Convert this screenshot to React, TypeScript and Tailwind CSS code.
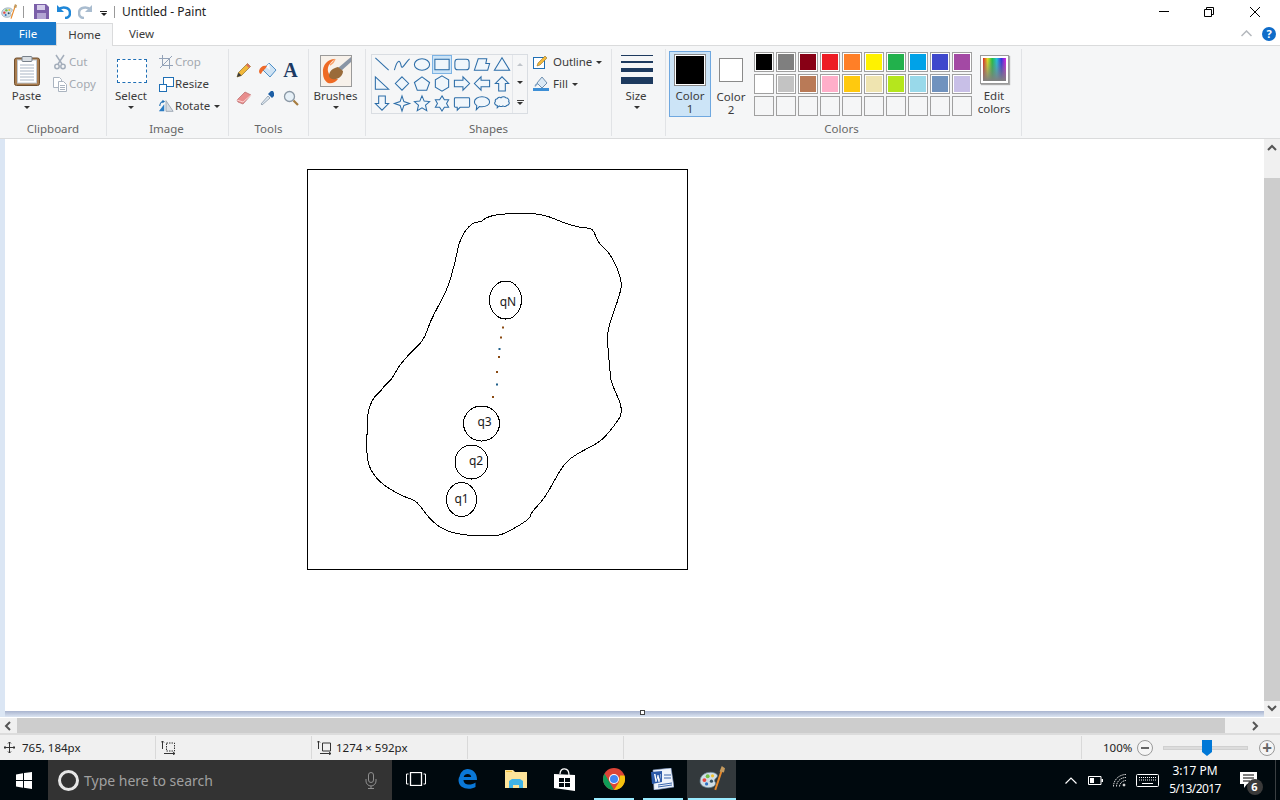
import type { ReactNode } from 'react'

const palette = [
  ['#000000', '#7f7f7f', '#880015', '#ed1c24', '#ff7f27', '#fff200', '#22b14c', '#00a2e8', '#3f48cc', '#a349a4'],
  ['#ffffff', '#c3c3c3', '#b97a57', '#ffaec9', '#ffc90e', '#efe4b0', '#b5e61d', '#99d9ea', '#7092be', '#c8bfe7'],
]

const shapes: ReactNode[] = [
  <path d="M3 3 17 16" />,
  <path d="M2 16C5 4 8 5 9 11c1 6 5-4 9-7" fill="none" />,
  <ellipse cx="10" cy="10" rx="8" ry="6" />,
  <rect x="2.5" y="4.5" width="15" height="11" />,
  <rect x="2.5" y="4.5" width="15" height="11" rx="3" />,
  <path d="M6 4h9l-1 5h4l-2 7H2Z" />,
  <path d="M10 3l8 13H2Z" />,
  <path d="M3 3l14 13H3Z" />,
  <path d="M10 3l7 7-7 7-7-7Z" />,
  <path d="M10 3l8 6-3 8H5L2 9Z" />,
  <path d="M10 2l7 4v8l-7 4-7-4V6Z" />,
  <path d="M2 6.5h9V3l7 7-7 7v-3.5H2Z" />,
  <path d="M18 6.5H9V3l-7 7 7 7v-3.5h9Z" />,
  <path d="M6.5 18V10H3l7-7 7 7h-3.5v8Z" />,
  <path d="M6.5 2v8H3l7 7 7-7h-3.5V2Z" />,
  <path d="M10 2l2 6 6 2-6 2-2 6-2-6-6-2 6-2Z" />,
  <path d="M10 2l2.3 5.5 5.7.5-4.3 3.8 1.3 5.7-5-3-5 3 1.3-5.700L2 8l5.700-.5Z" />,
  <path d="M10 2l2.5 4H17l-2.200 4 2.200 4h-4.500L10 18l-2.500-4H3l2.200-4L3 6h4.500Z" />,
  <path d="M3 4h14a1 1 0 0 1 1 1v8a1 1 0 0 1-1 1H8l-3 3v-3H3a1 1 0 0 1-1-1V5a1 1 0 0 1 1-1Z" />,
  <path d="M10 3c4.500 0 8 2.300 8 5.300s-3.500 5.200-8 5.200c-1 0-2 0-2.800-.3L4 16.500l.5-4.300C3 11.200 2 9.800 2 8.300 2 5.300 5.500 3 10 3Z" />,
  <path d="M5 5c1-2 3-2 4-1 1-1.500 4-1.500 5 0 2 0 4 2 3 4 1.500 1.500 0 4-2 4-1 1.500-3 1.500-4 .5-1 1-3 1-4 0l-2 2v-2.500C2.500 12 1.500 9.500 3 8c-.5-1.500.5-3 2-3Z" />,
]

// traced from the freehand outline
const blob = [
  [396.7, 370], [392, 379], [385, 385], [381.7, 390], [373, 398], [367.3, 413], [367, 436], [366.7, 458], [371.7, 473],
  [385, 486.7], [406.7, 498], [416.7, 500.7], [430, 520], [446.7, 531.7], [470, 536], [496.7, 536], [506.7, 532.7],
  [530, 519], [530.7, 513], [545, 498], [560, 470], [570, 458], [588, 448], [601.7, 440.7], [615, 425], [624, 410.7],
  [610.7, 381.7], [610, 370], [608, 350], [607, 330], [620.7, 293], [621.7, 280], [611.7, 255], [598, 243], [593, 228],
  [581.7, 228], [563, 222.7], [550, 216.7], [533, 213], [498, 214], [485, 218], [481.7, 221.7], [471.7, 222.7], [460, 238],
  [455, 263], [448, 287], [440, 303], [430, 321.7], [424, 340], [410, 353], [400, 365],
]

function smoothPath(pts: number[][]) {
  const mid = (a: number[], b: number[]) => `${(a[0] + b[0]) / 2} ${(a[1] + b[1]) / 2}`
  let d = `M${mid(pts[pts.length - 1], pts[0])}`
  pts.forEach((p, i) => {
    d += `Q${p[0]} ${p[1]} ${mid(p, pts[(i + 1) % pts.length])}`
  })
  return d + 'Z'
}

function Caret({ className = '' }: { className?: string }) {
  return <span className={`inline-block border-x-[3px] border-t-[3px] border-x-transparent border-t-[#333] ${className}`} />
}

function PaintIcon({ size }: { size: number }) {
  return (
    <svg width={size} height={size} viewBox="0 0 24 24">
      <path d="M1 14C1 8 7 5 13 6c4 1 5 3 3 5-2 1-2 3-1 4 1 2-1 5-6 5-4 0-8-2-8-6Z" fill="#cfdde6" stroke="#65808f" strokeWidth=".7" />
      <circle cx="5" cy="13" r="1.800" fill="#e8483e" />
      <circle cx="8" cy="9.500" r="1.800" fill="#72bf44" />
      <circle cx="12.500" cy="9" r="1.500" fill="#f2c230" />
      <circle cx="7" cy="16.500" r="1.500" fill="#2e6fc0" />
      <circle cx="11.500" cy="14" r="1.500" fill="#36505f" />
      <path d="M21 4 15 22" stroke="#e8892b" strokeWidth="1.800" />
      <path d="M19 5 21 0l3 2-1 4Z" fill="#c49a5e" />
    </svg>
  )
}

function PasteIcon() {
  return (
    <svg width="26" height="31" viewBox="0 0 26 31">
      <rect x=".5" y="3" width="25" height="27.500" rx="2" fill="#a87c4f" stroke="#6f4f2e" />
      <rect x="3.500" y="5" width="19" height="23" fill="#fff" stroke="#c0c8d0" />
      <path d="M6 10h14M6 13h14M6 16h14M6 19h14M6 22h14M6 25h14" stroke="#a9b5c4" />
      <rect x="8" y="1.500" width="10" height="5" rx="1" fill="#d8dde2" stroke="#77808a" />
    </svg>
  )
}

function CutIcon() {
  return (
    <svg width="12" height="16" viewBox="0 0 12 16" fill="none" stroke="#a4aebb" strokeWidth="1.500">
      <path d="M2 1l6 9M10 1 4 10" />
      <circle cx="3" cy="12.500" r="2.200" />
      <circle cx="9" cy="12.500" r="2.200" />
    </svg>
  )
}

function CopyIcon() {
  return (
    <svg width="16" height="16" viewBox="0 0 16 16" fill="#fff" stroke="#aab4c0">
      <path d="M1.500 1.500h6l2 2v8h-8Z" />
      <path d="M6.500 5.500h5l3 3v7h-8Z" />
      <path d="M8 9.500h5M8 11.500h5M8 13.500h5" />
    </svg>
  )
}

function SelectIcon() {
  return <div className="ml-[1px] w-[30px] h-[24px] border border-dashed border-[#1f6fb5] bg-white" />
}

function CropIcon() {
  return (
    <svg width="14" height="14" viewBox="0 0 14 14" fill="none" stroke="#94a3b8">
      <path d="M3.500 0v10.500H14M0 3.500h10.500V14M1 13 13 1" />
    </svg>
  )
}

function ResizeIcon() {
  return (
    <svg width="15" height="15" viewBox="0 0 15 15" fill="#fff" stroke="#1f6fb5">
      <rect x="4.500" y=".5" width="10" height="9" />
      <rect x=".5" y="7.500" width="7" height="7" />
    </svg>
  )
}

function RotateIcon() {
  return (
    <svg width="18" height="14" viewBox="0 0 18 14">
      <path d="M1 13 7 5v8Z" fill="#2b7cc4" />
      <path d="M9 1l8 12H9Z" fill="#d8dde3" stroke="#9aa5b2" />
      <path d="M2 7c0-3 2-5 4-5" fill="none" stroke="#1f6fb5" strokeWidth="1.300" />
      <path d="M5 0l3 2-3 2Z" fill="#1f6fb5" />
    </svg>
  )
}

function ToolIcon({ name }: { name: string }) {
  if (name === 'pencil')
    return (
      <svg width="16" height="16" viewBox="0 0 16 16">
        <path d="M1 15l1.500-4.500L11.500 1.500l3 3-9 9Z" fill="#f2b83a" stroke="#8e7430" strokeWidth=".7" />
        <path d="M11.500 1.500l3 3-1.500 1.500-3-3Z" fill="#d9705c" />
        <path d="M1 15l1.500-4.500 3 3Z" fill="#3b3b3b" />
      </svg>
    )
  if (name === 'fill')
    return (
      <svg width="18" height="17" viewBox="0 0 18 17">
        <path d="M10 1l7 7-6 7-7-7Z" fill="#cfe3f4" stroke="#4d8ec6" />
        <path d="M10 1 7 5l4 3Z" fill="#f7f9fb" />
        <path d="M8 4C4 3 1 5 0 9c0 2 1 3 2 3 1-2 2-4 4-5Z" fill="#ef6a2b" />
      </svg>
    )
  if (name === 'text')
    return (
      <span className="font-['Liberation_Serif',serif] font-bold text-[20px] leading-none text-[#1c3a63]">A</span>
    )
  if (name === 'eraser')
    return (
      <svg width="16" height="14" viewBox="0 0 16 14">
        <path d="M1 9 9 1l6 3-8 9-5-2Z" fill="#e88d8d" stroke="#b56a6a" strokeWidth=".7" />
        <path d="M1 9l6 2 8-7" fill="none" stroke="#fbd0d0" />
      </svg>
    )
  if (name === 'picker')
    return (
      <svg width="16" height="16" viewBox="0 0 16 16">
        <path d="M2 15 1 14l7-8 2 2Z" fill="#dbe5ee" stroke="#7b8d9d" strokeWidth=".7" />
        <path d="M8 4l4 4 2-2V3l-1-2h-2Z" fill="#1d5fa5" />
      </svg>
    )
  return (
    <svg width="16" height="16" viewBox="0 0 16 16" fill="none">
      <circle cx="6.500" cy="6.500" r="5" fill="#e6f0f7" stroke="#8a98a5" strokeWidth="1.300" />
      <path d="M10.500 10.500 15 15" stroke="#a67c3f" strokeWidth="2.200" />
    </svg>
  )
}

function BrushesIcon() {
  return (
    <div className="w-[32px] h-[32px] border border-[#9a9a9a] bg-[#f7f1ea] overflow-hidden">
      <svg width="30" height="30" viewBox="0 0 30 30">
        <path d="M2 17C1 9 7 3 14 3 8 7 5 12 8 18c2 3 4 5 9 5-3 4-7 5-10 4-3-2-5-5-5-10Z" fill="#ee6a24" />
        <path d="M14 3c-1 3-3 5-5 6" fill="none" stroke="#f9a36f" strokeWidth="1.500" />
        <path d="M30 1 17 12l3 3L30 6Z" fill="#8995a5" />
        <path d="M17 11c-5 1-9 4-9 9 0 2 4 4 7 3 5-1 7-5 7-8Z" fill="#9a6b39" />
      </svg>
    </div>
  )
}

function OutlineIcon() {
  return (
    <svg width="16" height="16" viewBox="0 0 16 16">
      <rect x=".5" y="3.500" width="11" height="11" fill="#fff" stroke="#1f6fb5" />
      <path d="M4 12l1-3 7-7 2 2-7 7Z" fill="#f2b83a" stroke="#8e7430" strokeWidth=".6" />
    </svg>
  )
}

function FillIcon() {
  return (
    <svg width="16" height="16" viewBox="0 0 16 16">
      <path d="M9 1l5 6-5 5-5-5Z" fill="#dbe9f5" stroke="#6f8fae" />
      <path d="M4 7C2 8 1 10 2 11c1-1 2-2 3-3Z" fill="#7ba0c4" />
      <rect y="12" width="16" height="3" fill="#3d8fd6" />
    </svg>
  )
}

function BigButton({ width, icon, label, className = '' }: { width: string; icon: ReactNode; label: string; className?: string }) {
  return (
    <div className={`flex flex-col items-center pt-[5px] ${width} ${className}`}>
      <div className="h-[33px] flex items-center justify-center">{icon}</div>
      <div className="h-[14px] mt-[2px] leading-[14px]">{label}</div>
      <Caret className="mt-[3px]" />
    </div>
  )
}

function SmallButton({ icon, label, muted, caret }: { icon: ReactNode; label: string; muted?: boolean; caret?: boolean }) {
  return (
    <div className={`h-[22px] flex items-center gap-[1px] ${muted ? 'text-[#a3a9b0]' : ''}`}>
      <div className="w-[16px] flex justify-center">{icon}</div>
      <span>{label}</span>
      {caret && <Caret className="ml-[3px]" />}
    </div>
  )
}

function Group({ width, label, children, labelClass = '' }: { width: string; label: string; children: ReactNode; labelClass?: string }) {
  return (
    <div className={`${width} h-[87px] flex flex-col border-r border-[#e1e3e6]`}>
      <div className="flex-1 flex min-h-0">{children}</div>
      <div className={`h-[14px] leading-[14px] text-center text-[#666] ${labelClass}`}>{label}</div>
    </div>
  )
}

function Ribbon() {
  return (
    <div className="h-[93px] shrink-0 bg-[#f5f6f7] border-b border-[#dadbdc] flex items-start pt-[3px] text-[#3b3b3b]">
      <Group width="w-[107px]" label="Clipboard">
        <BigButton width="w-[43px]" className="ml-[5px]" icon={<PasteIcon />} label="Paste" />
        <div className="pt-[2px] ml-[4px]">
          <SmallButton muted icon={<CutIcon />} label="Cut" />
          <SmallButton muted icon={<CopyIcon />} label="Copy" />
        </div>
      </Group>

      <Group width="w-[122px]" label="Image" labelClass="pr-[2px]">
        <BigButton width="w-[48px]" icon={<SelectIcon />} label="Select" />
        <div className="pt-[2px] ml-[3px]">
          <SmallButton muted icon={<CropIcon />} label="Crop" />
          <SmallButton icon={<ResizeIcon />} label="Resize" />
          <SmallButton icon={<RotateIcon />} label="Rotate" caret />
        </div>
      </Group>

      <Group width="w-[80px]" label="Tools">
        <div className="grid grid-cols-[24px_23px_23px] grid-rows-[28px_28px] items-center justify-items-center pl-[3px] pt-[7px]">
          {['pencil', 'fill', 'text', 'eraser', 'picker', 'zoom'].map((t) => (
            <ToolIcon key={t} name={t} />
          ))}
        </div>
      </Group>

      <Group width="w-[57px]" label="">
        <BigButton width="w-[53px]" icon={<BrushesIcon />} label="Brushes" />
      </Group>

      <Group width="w-[246px]" label="Shapes">
        <div className="ml-[5px] mt-[5px] w-[157px] h-[60px] border border-[#d9dde2] flex">
          <div className="w-[140px] grid grid-cols-7 auto-rows-[19.33px]">
            {shapes.map((s, i) => (
              <div key={i} className={`flex items-center justify-center ${i === 3 ? 'bg-[#cce4f7] outline outline-[#7db3e4] -outline-offset-1' : ''}`}>
                <svg width="20" height="19" viewBox="0 0 20 20" fill="#f0f6fb" stroke="#2c6da8" strokeWidth="1.100">
                  {s}
                </svg>
              </div>
            ))}
          </div>
          <div className="flex-1 border-l border-[#e3e6ea] flex flex-col items-center justify-around">
            <span className="border-x-[3px] border-b-[3px] border-x-transparent border-b-[#bfc4ca]" />
            <Caret />
            <div className="flex flex-col items-center gap-[1px]">
              <span className="w-[7px] h-[1px] bg-[#444]" />
              <Caret />
            </div>
          </div>
        </div>
        <div className="pt-[2px] ml-[5px]">
          <div className="h-[22px] flex items-center gap-[4px]">
            <OutlineIcon />
            <span className="tracking-[-0.1px]">Outline</span>
            <Caret />
          </div>
          <div className="h-[22px] flex items-center gap-[4px]">
            <FillIcon />
            <span>Fill</span>
            <Caret />
          </div>
        </div>
      </Group>

      <Group width="w-[54px]" label="">
        <div className="flex flex-col items-center w-[32px] ml-[9px] pt-[6px]">
          <div className="w-[32px] h-[33px] flex flex-col">
            <div className="h-[1px] bg-[#1d3a5f]" />
            <div className="h-[2px] mt-[5px] bg-[#1d3a5f]" />
            <div className="h-[4px] mt-[5px] bg-[#1d3a5f]" />
            <div className="h-[7px] mt-[5px] bg-[#1d3a5f]" />
          </div>
          <div className="h-[14px] mt-[1px] leading-[14px] pr-[2px]">Size</div>
          <Caret className="mt-[3px]" />
        </div>
      </Group>

      <Group width="w-[356px]" label="Colors" labelClass="pr-[4px]">
        <div className="ml-[3px] mt-[2px] w-[42px] h-[66px] bg-[#cce4f7] border border-[#6fa8e0] flex flex-col items-center pt-[2px]">
          <div className="w-[32px] h-[32px] border border-[#8a8a8a] p-[1px] bg-white">
            <div className="w-full h-full bg-black" />
          </div>
          <div className="mt-[3px] leading-[13px] text-center">
            Color
            <br />1
          </div>
        </div>
        <div className="w-[40px] flex flex-col items-center pt-[9px]">
          <div className="w-[24px] h-[24px] border border-[#8a8a8a] bg-white" />
          <div className="mt-[8px] leading-[13px] text-center">
            Color
            <br />2
          </div>
        </div>
        <div className="ml-[3px] mt-[3px] flex flex-col gap-[2px]">
          {palette.map((row) => (
            <div key={row[0]} className="flex gap-[2px]">
              {row.map((c) => (
                <div key={c} className="w-[20px] h-[20px] border border-[#a0a0a0] p-[1px] bg-white">
                  <div className="w-full h-full" style={{ backgroundColor: c }} />
                </div>
              ))}
            </div>
          ))}
          <div className="flex gap-[2px]">
            {Array.from({ length: 10 }).map((_, i) => (
              <div key={i} className="w-[20px] h-[20px] border border-[#a0a0a0]" />
            ))}
          </div>
        </div>
        <div className="w-[44px] flex flex-col items-center pt-[6px]">
          <div className="w-[29px] h-[29px] border border-[#9a9a9a] p-[2px] bg-white shadow-[1px_1px_1px_#aaa]">
            <div className="w-full h-full bg-[linear-gradient(to_bottom,transparent,#808080),linear-gradient(to_right,#e02020,#e0e020,#20c040,#20c0e0,#3030e0,#e020e0)]" />
          </div>
          <div className="mt-[5px] leading-[13px] text-center">
            Edit
            <br />
            colors
          </div>
        </div>
      </Group>
    </div>
  )
}

function Drawing() {
  const dots = [
    [503, 327.5, '#8a4a12'],
    [501, 337.5, '#8a4a12'],
    [499.5, 349, '#1f5f8a'],
    [499, 357, '#8a4a12'],
    [497, 372, '#8a4a12'],
    [497, 384.5, '#1f5f8a'],
    [493, 397, '#8a4a12'],
  ] as const
  return (
    <div className="ml-[302px] mt-[30px] w-[381px] h-[401px] border border-black bg-white">
      <svg width="379" height="399" viewBox="308 170 379 399" className="block">
        <g fill="none" stroke="#000" shapeRendering="crispEdges">
          <path d={smoothPath(blob)} />
          <ellipse cx="505.5" cy="300" rx="16" ry="19" />
          <ellipse cx="481.5" cy="423.5" rx="18" ry="17.5" />
          <ellipse cx="471.5" cy="462" rx="16.5" ry="17" />
          <ellipse cx="461.5" cy="499.5" rx="15" ry="17" />
        </g>
        {dots.map(([x, y, c]) => (
          <rect key={y} x={x - 1} y={y - 1} width="2" height="2" fill={c} />
        ))}
        <g fontSize="12" textAnchor="middle" fill="#1a1a1a">
          <text x="508" y="306">qN</text>
          <text x="484.5" y="426">q3</text>
          <text x="476" y="465">q2</text>
          <text x="461.5" y="503">q1</text>
        </g>
      </svg>
    </div>
  )
}

function Chevron({ d, className = '' }: { d: string; className?: string }) {
  return (
    <svg width="10" height="10" viewBox="0 0 10 10" fill="none" stroke="#555" strokeWidth="2" className={className}>
      <path d={d} />
    </svg>
  )
}

function StatusBar() {
  return (
    <div className="h-[27px] shrink-0 bg-[#f0f0f0] border-t-2 border-[#dcdcdc] flex items-center text-[#222]">
      <div className="w-[156px] h-[23px] border-r border-[#d9d9d9] flex items-center pl-[4px] gap-[7px]">
        <svg width="11" height="11" viewBox="0 0 11 11" fill="none" stroke="#333">
          <path d="M5.5 0v11M0 5.5h11M4 1.500l1.500-1.500L7 1.500M4 9.500 5.500 11 7 9.500M1.500 4 0 5.500 1.500 7M9.500 4 11 5.500 9.500 7" />
        </svg>
        <span>765, 184px</span>
      </div>
      <div className="w-[156px] h-[23px] border-r border-[#d9d9d9] flex items-center pl-[5px]">
        <svg width="14" height="14" viewBox="0 0 14 14" fill="none" stroke="#333">
          <path d="M1.500 0v8M0 1.500 1.500 0 3 1.500" />
          <path d="M5.500 2h8v8h-8Z" strokeDasharray="1.500 1" />
          <path d="M3 12.500h11M12 11l2 1.500-2 1.500" />
        </svg>
      </div>
      <div className="w-[156px] h-[23px] border-r border-[#d9d9d9] flex items-center pl-[5px] gap-[5px]">
        <svg width="14" height="14" viewBox="0 0 14 14" fill="none" stroke="#333">
          <path d="M1.500 0v8M0 1.500 1.500 0 3 1.500" />
          <path d="M5.500 2h8v8h-8Z" />
          <path d="M3 12.500h11M12 11l2 1.500-2 1.500" />
        </svg>
        <span>1274 × 592px</span>
      </div>
      <div className="w-[156px] h-[23px] border-r border-[#d9d9d9]" />
      <div className="w-[458px] h-[23px] border-r border-[#d9d9d9]" />
      <div className="flex-1 flex items-center pl-[21px]">
        <span className="w-[30px]">100%</span>
        <span className="ml-[4px] w-[16px] h-[16px] rounded-full border border-[#999] bg-[#f5f5f5] flex items-center justify-center">
          <span className="w-[8px] h-[2px] bg-[#666]" />
        </span>
        <div className="ml-[10px] w-[85px] h-[4px] bg-[#dcdcdc] border border-[#d0d0d0] flex items-center">
          <svg width="10" height="16" viewBox="0 0 10 16" className="ml-[38px] shrink-0">
            <path d="M0 0h10v12l-5 4-5-4Z" fill="#0078d7" />
          </svg>
        </div>
        <span className="ml-[11px] w-[16px] h-[16px] rounded-full border border-[#999] bg-[#f5f5f5] flex items-center justify-center text-[#666] text-[17px] leading-none font-bold">
          +
        </span>
      </div>
    </div>
  )
}

function TaskCell({ children, bar, active }: { children: ReactNode; bar?: string; active?: boolean }) {
  return (
    <div className={`w-[49px] h-full flex flex-col items-center ${active ? 'bg-[#33393c]' : ''}`}>
      <div className="flex-1 flex items-center justify-center">{children}</div>
      <div className={`h-[2px] ${bar ?? ''}`} />
    </div>
  )
}

function Taskbar() {
  return (
    <div className="h-[40px] shrink-0 bg-[#00090e] flex items-center text-white">
      <div className="w-[48px] h-full flex items-center justify-center">
        <svg width="16" height="17" viewBox="0 0 16 17" fill="#fff">
          <path d="M0 2.400 7 1.300V8H0ZM8 1.100 16 0v8H8ZM0 9h7v6.700L0 14.600ZM8 9h8v8l-8-1.200Z" />
        </svg>
      </div>
      <div className="w-[344px] h-full bg-[#333] flex items-center pl-[10px]">
        <div className="w-[21px] h-[21px] rounded-full border-[3px] border-[#e6e6e6]" />
        <span className="ml-[5px] text-[14px] text-[#a0a0a0]">Type here to search</span>
        <svg width="12" height="17" viewBox="0 0 12 17" fill="none" stroke="#8f8f8f" className="ml-auto mr-[15px]">
          <rect x="3.500" y=".5" width="5" height="10" rx="2.500" />
          <path d="M1 7v2a5 5 0 0 0 10 0V7M6 14v2.500M3 16.500h6" />
        </svg>
      </div>
      <div className="ml-[1px] flex h-full">
        <TaskCell>
          <svg width="20" height="14" viewBox="0 0 20 14" fill="none" stroke="#fff" className="-ml-[3px]">
            <rect x="4.500" y=".5" width="11" height="13" strokeWidth="1.300" />
            <path d="M2.500 2H.5v10h2M17.500 2h2v10h-2" />
          </svg>
        </TaskCell>
        <TaskCell>
          <svg width="20" height="20" viewBox="0 0 20 20" fill="#0a78d7">
            <path d="M10.500 0C15.500 0 20 3.500 20 11H6.500c0 5 7 6 12 2.500v4.500c-6 3.500-17 2-17-7 0-3 2-5.500 5-7C4 5.500 3 7 2.500 8.500 3 3.500 6.500 0 10.500 0ZM6.700 8h7.500c0-4-7-4-7.500 0Z" />
          </svg>
        </TaskCell>
        <TaskCell>
          <svg width="22" height="20" viewBox="0 0 22 20">
            <path d="M0 1h8l2 2h12v16H0Z" fill="#fde49a" />
            <path d="M1 2h6v1H1Z" fill="#f5c33b" />
            <path d="M4 19v-7l3-2h8l3 2v7h-4v-3H8v3Z" fill="#3fb4e8" />
          </svg>
        </TaskCell>
        <TaskCell>
          <svg width="21" height="23" viewBox="0 0 21 23">
            <path d="M0 6l21 1v16L0 20Z" fill="#fff" />
            <path d="M6 6c0-7 9-7 9 1" fill="none" stroke="#fff" strokeWidth="1.300" />
            <path d="M5 10h5v4H5ZM11 10h5v4h-5ZM5 15h5v4H5ZM11 15h5v4h-5Z" fill="#00090e" />
          </svg>
        </TaskCell>
        <TaskCell bar="w-[40px] bg-[#99ebff]">
          <svg width="22" height="22" viewBox="0 0 22 22">
            <circle cx="11" cy="11" r="11" fill="#db4437" />
            <path d="M11 22A11 11 0 0 1 1.500 5.500L7 15l4 7Z" fill="#0f9d58" />
            <path d="M21.500 7.500A11 11 0 0 1 11 22l5-8 1-6.500Z" fill="#f4c20d" />
            <circle cx="11" cy="11" r="5" fill="#fff" />
            <circle cx="11" cy="11" r="4" fill="#4285f4" />
          </svg>
        </TaskCell>
        <TaskCell bar="w-[40px] bg-[#99ebff]">
          <svg width="23" height="22" viewBox="0 0 23 22">
            <path d="M2 2 20 0l3 19-20 3Z" fill="#eef3fa" stroke="#7d99c8" strokeWidth=".6" />
            <path d="M0 4l11-1v11L1 16Z" fill="#2c5aa8" />
            <path d="M3 6h1.500l1 6 1-5h1l1 5 1-6H10l-1.500 8h-1L6.500 10l-1 4h-1Z" fill="#fff" />
            <path d="M13 7h7M13 10h7M7 17l14-2M7 19l14-2" stroke="#3a66ad" />
          </svg>
        </TaskCell>
        <TaskCell active bar="w-[48px] bg-[#99ebff]">
          <PaintIcon size={26} />
        </TaskCell>
      </div>
      <div className="ml-auto flex items-center h-full">
        <div className="w-[24px] flex justify-center">
          <svg width="12" height="7" viewBox="0 0 12 7" fill="none" stroke="#fff" strokeWidth="1.200">
            <path d="M.5 6.500 6 1l5.500 5.500" />
          </svg>
        </div>
        <div className="w-[24px] flex justify-center">
          <svg width="15" height="9" viewBox="0 0 15 9">
            <path d="M.5.5h12.500v8H.5Z" fill="none" stroke="#fff" />
            <path d="M2 2h4v5H2ZM13.500 3H15v3h-1.500Z" fill="#fff" />
          </svg>
        </div>
        <div className="w-[25px] flex justify-center">
          <svg width="14" height="13" viewBox="0 0 14 13" fill="none" stroke="#d8d8d8">
            <path d="M.5 12.500C.5 6 6 .5 13 .5M3.500 12.500c0-5 4-9 9.500-9M6.500 12.500c0-3 3-6 6.500-6" strokeDasharray="1.500 .7" />
            <circle cx="11" cy="11" r="1" fill="#fff" />
          </svg>
        </div>
        <div className="w-[30px] flex justify-center">
          <svg width="23" height="13" viewBox="0 0 23 13" fill="none" stroke="#fff">
            <rect x=".5" y=".5" width="22" height="12" rx="1" />
            <path d="M3 3.500h17M3 6h17" strokeDasharray="1 1" />
            <path d="M6 9.500h11" />
          </svg>
        </div>
        <div className="w-[66px] text-center text-[12px] leading-[18px]">
          <div>3:17 PM</div>
          <div className="tracking-[-0.6px]">5/13/2017</div>
        </div>
        <div className="w-[40px] h-full flex items-center justify-center">
          <div className="relative">
            <svg width="17" height="16" viewBox="0 0 17 16" fill="#fff">
              <path d="M0 0h17v12H7l-3 4v-4H0Z" />
              <path d="M3 3h11M3 6h11M3 9h7" stroke="#000" />
            </svg>
            <span className="absolute left-[7px] top-[7px] w-[16px] h-[16px] rounded-full bg-[#3a3a3a] text-[11px] leading-[16px] font-bold text-center">
              6
            </span>
          </div>
        </div>
        <div className="w-[7px]" />
        <div className="w-[1px] h-full bg-[#3a3f42]" />
        <div className="w-[4px]" />
      </div>
    </div>
  )
}

export default function App() {
  return (
    <div className="w-[1280px] h-[800px] overflow-hidden flex flex-col bg-white text-[11.5px] font-['Noto_Sans','Liberation_Sans',sans-serif]">
      {/* TITLE BAR */}
      <div className="h-[23px] shrink-0 flex items-center text-[#222]">
        <div className="ml-[1px]">
          <PaintIcon size={16} />
        </div>
        <div className="ml-[6px] w-[1px] h-[12px] bg-[#999]" />
        <svg width="15" height="15" viewBox="0 0 15 15" className="ml-[10px]">
          <path d="M0 0h12l3 3v12H0Z" fill="#7b5fa9" />
          <rect x="3" y="1" width="8" height="5" fill="#d5ccea" />
          <rect x="3" y="9" width="9" height="6" fill="#b3a5d3" />
        </svg>
        <svg width="14" height="14" viewBox="0 0 14 14" fill="none" className="ml-[8px]">
          <path d="M1 5c4-4 12-3 12 3 0 3-2 5-5 5" stroke="#1f87d8" strokeWidth="2.500" />
          <path d="M0 0v7h7Z" fill="#1f87d8" />
        </svg>
        <svg width="14" height="14" viewBox="0 0 14 14" fill="none" className="ml-[7px]">
          <path d="M13 5C9 1 1 2 1 8c0 3 2 5 5 5" stroke="#a9bccf" strokeWidth="2.500" />
          <path d="M14 0v7H7Z" fill="#a9bccf" />
        </svg>
        <div className="ml-[8px] mt-[3px] flex flex-col items-center gap-[1px]">
          <span className="w-[7px] h-[1px] bg-[#222]" />
          <span className="border-x-[3.500px] border-t-[3.500px] border-x-transparent border-t-[#222]" />
        </div>
        <div className="ml-[7px] w-[1px] h-[12px] bg-[#999]" />
        <span className="ml-[7px] text-[12px]">Untitled - Paint</span>
        <div className="ml-auto flex items-center text-black">
          <span className="w-[10px] h-[1px] bg-black" />
          <svg width="10" height="10" viewBox="0 0 10 10" fill="none" stroke="#000" className="ml-[35px]">
            <path d="M.5 2.500h7v7h-7ZM2.500 2.500v-2h7v7h-2" />
          </svg>
          <svg width="10" height="10" viewBox="0 0 10 10" fill="none" stroke="#000" className="ml-[36px] mr-[20px]">
            <path d="M0 0 10 10M10 0 0 10" />
          </svg>
        </div>
      </div>

      {/* TABS */}
      <div className="h-[23px] shrink-0 flex items-end text-[#3b3b3b] border-b border-[#dadbdc]">
        <div className="w-[56px] h-[23px] bg-[#1979ca] text-white flex items-center justify-center">File</div>
        <div className="w-[57px] h-[23px] -mb-px bg-[#f5f6f7] border-x border-t border-[#dadbdc] flex items-center justify-center">
          Home
        </div>
        <div className="w-[57px] h-[23px] flex items-center justify-center">View</div>
        <div className="ml-auto h-[23px] flex items-center">
          <svg width="11" height="7" viewBox="0 0 11 7" fill="none" stroke="#b4b8bd" strokeWidth="1.500">
            <path d="M.5 6 5.500 1l5 5" />
          </svg>
          <div className="ml-[10px] mr-[4px] w-[14px] h-[14px] rounded-full bg-[#0f6cc9] text-white text-[11px] leading-[14px] font-bold text-center">
            ?
          </div>
        </div>
      </div>

      <Ribbon />

      {/* CANVAS */}
      <div className="flex-1 flex min-h-0">
        <div className="flex-1 flex flex-col min-w-0">
          <div className="flex-1 flex min-h-0">
            <div className="w-[5px] bg-[#dbe6f4]" />
            <div className="flex-1 bg-white min-w-0">
              <Drawing />
            </div>
          </div>
          <div className="h-[6px] shrink-0 flex bg-[linear-gradient(to_bottom,#a9b4cf,#dce5f2)]">
            <div className="w-[5px] bg-[#dbe6f4]" />
            <div className="ml-[635px] mt-[-1px] w-[5px] h-[5px] bg-white border border-[#444]" />
          </div>
        </div>
        <div className="w-[16px] shrink-0 bg-[#f0f0f0] flex flex-col items-center">
          <Chevron d="M1 7 5 3l4 4" className="mt-[4px]" />
          <div className="mt-[25px] w-full h-[523px] bg-[#cdcdcd]" />
          <Chevron d="M1 3l4 4 4-4" className="mt-[2px]" />
        </div>
      </div>

      {/* HORIZONTAL SCROLL */}
      <div className="h-[16px] shrink-0 border-t border-white bg-[#f0f0f0] flex items-center">
        <Chevron d="M7 1 3 5l4 4" className="ml-[3px]" />
        <div className="ml-[4px] w-[1208px] h-full bg-[#cdcdcd]" />
        <Chevron d="M3 1l4 4-4 4" className="ml-[25px]" />
      </div>

      <StatusBar />
      <Taskbar />
    </div>
  )
}
